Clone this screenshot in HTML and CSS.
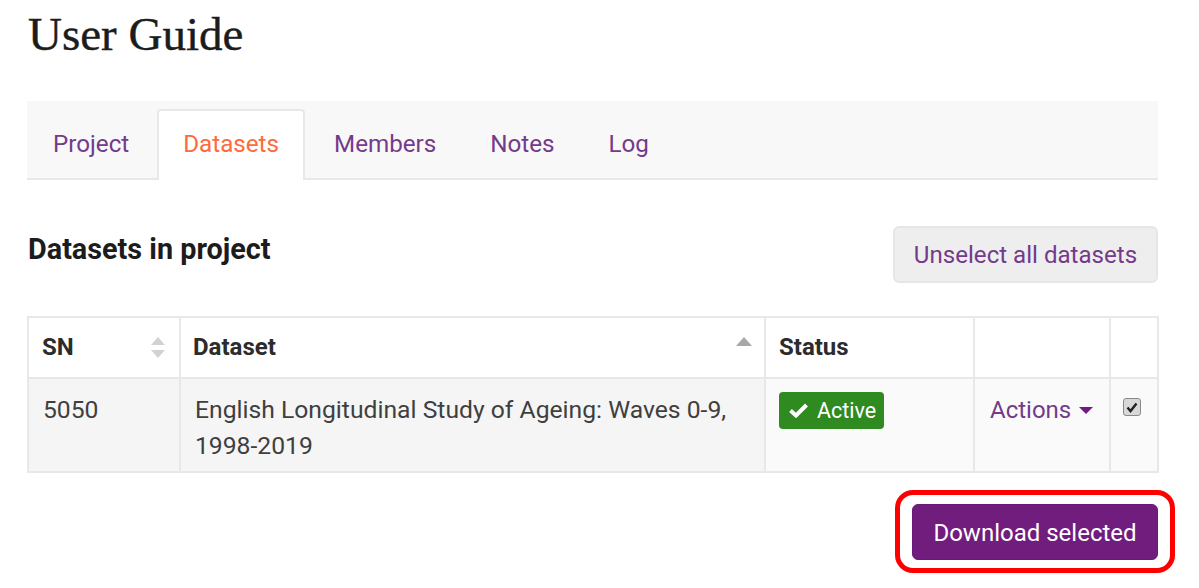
FILE: index.html
```html
<!DOCTYPE html>
<html lang="en">
<head>
<meta charset="utf-8">
<title>User Guide</title>
<link rel="stylesheet" href="styles.css">
</head>
<body>
<main class="page">
  <h1 class="title">User Guide</h1>
  <nav class="tabs">
    <a class="tab">Project</a>
    <a class="tab tab-active">Datasets</a>
    <a class="tab">Members</a>
    <a class="tab">Notes</a>
    <a class="tab">Log</a>
  </nav>
  <section class="head-row">
    <h2 class="subtitle">Datasets in project</h2>
    <button class="btn btn-light">Unselect all datasets</button>
  </section>
  <table class="grid">
    <colgroup>
      <col class="c-sn"><col class="c-ds"><col class="c-st"><col class="c-ac"><col class="c-ck">
    </colgroup>
    <thead>
      <tr>
        <th><span class="th-in">SN
          <svg class="sort" width="16" height="21" viewBox="0 0 16 21"><path d="M8 0l7 8H1z" fill="#d2d2d2"/><path d="M8 21l7-8H1z" fill="#d2d2d2"/></svg></span></th>
        <th><span class="th-in">Dataset
          <svg class="sort-up" width="16" height="9" viewBox="0 0 16 9"><path d="M8 0l8 9H0z" fill="#a8a8a8"/></svg></span></th>
        <th>Status</th>
        <th></th>
        <th></th>
      </tr>
    </thead>
    <tbody>
      <tr>
        <td class="shade">5050</td>
        <td class="shade">English Longitudinal Study of Ageing: Waves 0-9, 1998-2019</td>
        <td><span class="badge"><svg width="19" height="15" viewBox="0 0 19 15"><path d="M1.500 7.500l5.500 5L17.500 2" fill="none" stroke="#fff" stroke-width="4"/></svg>Active</span></td>
        <td><a class="actions">Actions<span class="caret"></span></a></td>
        <td class="ck-cell"><span class="check"><svg width="12" height="11" viewBox="0 0 12 11"><path d="M1.500 5.500l3 3.500 6-7.500" fill="none" stroke="#222" stroke-width="2.400"/></svg></span></td>
      </tr>
    </tbody>
  </table>
  <div class="foot">
    <div class="highlight"><button class="btn btn-primary">Download selected</button></div>
  </div>
</main>
</body>
</html>
```
FILE: styles.css
```css
* { box-sizing: border-box; }
html, body { margin: 0; background: #fff; }
body { font-family: Roboto, "Liberation Sans", sans-serif; color: #333; }
.page { padding: 0 41px 0 27px; height: 588px; overflow: hidden; }
.title { margin: 0; padding: 11px 0 0 1px; font-family: "Liberation Serif", serif; font-size: 47px; line-height: 46px; font-weight: 400; color: #1c1c1c; -webkit-text-stroke: 0.4px #1c1c1c; height: 101px; }
.tabs { display: flex; height: 79px; padding: 8px 0 0 2px; background: #f8f8f8; border-bottom: 2px solid #e8e8e8; color: #743a8c; font-size: 24.200px; }
.tab { padding: 9px 24px 0; height: 71px; line-height: 52px; margin-right: 6px; }
.tab-active { background: #fff; color: #ff6a3c; border: 2px solid #e8e8e8; border-bottom: 0; border-radius: 4px 4px 0 0; padding: 7px 24px 0; margin-left: -2px; margin-right: 5px; }
.head-row { display: flex; justify-content: space-between; align-items: flex-start; height: 136px; padding-top: 46px; }
.subtitle { margin: 0; padding: 7px 0 0 1px; font-size: 28.800px; line-height: 32px; font-weight: 700; color: #1c1c1c; }
.btn { font-family: inherit; border-radius: 6px; cursor: pointer; }
.btn-light { width: 265px; height: 57px; background: #eee; border: 2px solid #e6e6e6; color: #743a8c; font-size: 24.100px; }
.grid { width: 1130px; border-collapse: collapse; table-layout: fixed; font-size: 24.700px; border: 2px solid #e8e8e8; }
.c-sn { width: 152px; } .c-ds { width: 585px; } .c-st { width: 209px; } .c-ac { width: 136px; } .c-ck { width: 48px; }
th, td { border: 2px solid #e8e8e8; text-align: left; vertical-align: top; }
th { height: 61px; padding: 14px 13px 0; font-weight: 700; line-height: 30px; font-size: 24px; color: #2c2c2c; }
th:nth-child(2) { padding-left: 12px; }
td { height: 94px; padding: 13px 14px 7px; line-height: 36px; color: #3f3f3f; background: #fafafa; }
td.shade { background: #f5f5f5; }
td:nth-child(3) { padding-left: 13px; }
.th-in { display: flex; justify-content: space-between; align-items: center; }
.sort-up { margin-top: -12px; margin-right: -1px; }
.badge { display: inline-flex; align-items: center; gap: 9px; height: 37px; padding: 0 8px 0 10px; background: #2f8a1f; color: #fff; border-radius: 4px; font-size: 21.500px; vertical-align: top; }
.actions { display: inline-flex; align-items: center; color: #743a8c; margin-left: 1px; white-space: nowrap; font-size: 24px; }
.caret { width: 0; height: 0; margin-left: 8px; border: 7px solid transparent; border-top-color: #701a82; border-bottom: 0; }
.ck-cell { padding: 8px 0 0 12px; }
.check { display: flex; align-items: center; justify-content: center; width: 18px; height: 18px; background: #d8d8d8; border: 1px solid #8a8a8a; border-radius: 3px; margin-top: 11px; }
.foot { display: flex; justify-content: flex-end; margin-right: -17px; padding-top: 17px; }
.highlight { display: flex; align-items: center; justify-content: center; width: 280px; height: 83px; border: 5px solid #f00; border-radius: 18px; }
.btn-primary { width: 246px; height: 56px; padding-top: 4px; background: #701d7e; border: 1px solid #6a1a78; color: #fff; font-size: 24px; }
```
